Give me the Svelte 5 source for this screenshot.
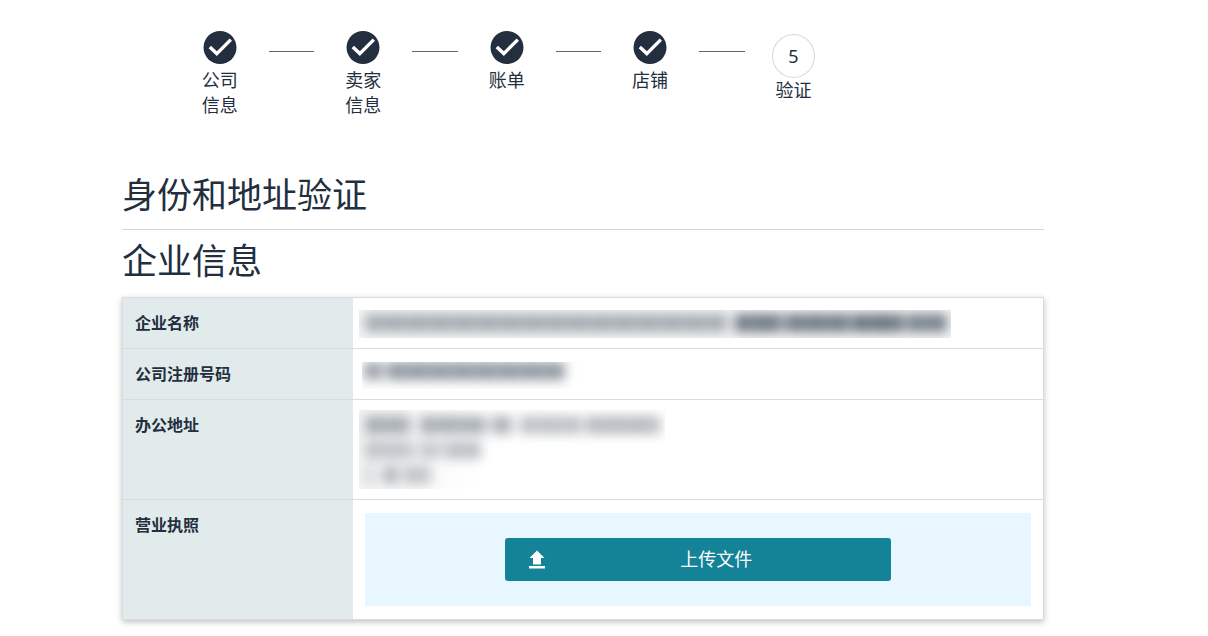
<script>
  const steps = [
    { label: "公司信息", done: true },
    { label: "卖家信息", done: true },
    { label: "账单", done: true },
    { label: "店铺", done: true },
    { label: "验证", done: false },
  ];

  // masked values are drawn as soft bars: [width, opacity, gap after]
  const rows = [
    {
      label: "企业名称",
      mask: "mask-name",
      lines: [
        [
          [362, 0.5, 8],
          [48, 0.85, 3],
          [64, 0.85, 2],
          [52, 0.9, 3],
          [40, 0.8, 0],
        ],
      ],
    },
    {
      label: "公司注册号码",
      mask: "mask-code",
      lines: [
        [
          [19, 0.6, 4],
          [178, 0.66, 0],
        ],
      ],
    },
    {
      label: "办公地址",
      mask: "mask-address",
      lines: [
        [
          [46, 0.5, 9],
          [67, 0.5, 5],
          [20, 0.5, 8],
          [62, 0.4, 4],
          [74, 0.44, 0],
        ],
        [
          [49, 0.34, 5],
          [24, 0.32, 3],
          [35, 0.4, 0],
        ],
        [
          [10, 0.22, 8],
          [16, 0.42, 5],
          [27, 0.36, 0],
        ],
      ],
    },
  ];
</script>

<svelte:head>
  <title>身份和地址验证</title>
</svelte:head>

<main>
  <ol class="steps">
    {#each steps as step, i}
      {#if i > 0}
        <li class="connector" aria-hidden="true"></li>
      {/if}
      <li class="step">
        {#if step.done}
          <svg class="check" viewBox="0 0 34 34" aria-hidden="true">
            <circle cx="17" cy="17.5" r="16.5" />
            <path d="M6.8 17 L13.8 23.6 L27.8 9.6" />
          </svg>
        {:else}
          <span class="number">{i + 1}</span>
        {/if}
        <span class="step-label">{step.label}</span>
      </li>
    {/each}
  </ol>

  <h1>身份和地址验证</h1>
  <h2>企业信息</h2>

  <table>
    <tbody>
      {#each rows as row}
        <tr>
          <th scope="row">{row.label}</th>
          <td class="masked-cell">
            <div class="mask {row.mask}">
              {#each row.lines as line}
                <div class="line">
                  {#each line as [width, opacity, gap]}
                    <span
                      style="width: {width}px; opacity: {opacity}; margin-right: {gap}px"
                    ></span>
                  {/each}
                </div>
              {/each}
            </div>
          </td>
        </tr>
      {/each}
      <tr>
        <th scope="row">营业执照</th>
        <td>
          <div class="upload">
            <button type="button">
              <svg viewBox="0 0 18 20" aria-hidden="true">
                <path d="M9 0.5 L16.5 8 H13 V14.5 H5 V8 H1.5 Z" />
                <rect x="1" y="16" width="16" height="2.5" />
              </svg>
              <span>上传文件</span>
            </button>
          </div>
        </td>
      </tr>
    </tbody>
  </table>
</main>

<style>
  :global(body) {
    margin: 0;
    background-color: #fff;
  }

  main {
    margin: 0 164px 0 122px;
    padding: 30px 0 15px;
    font-family: "Noto Sans", "Noto Sans CJK SC", sans-serif;
    font-size: 18px;
    line-height: 25px;
    color: #232f3e;
  }

  .steps {
    display: flex;
    width: 70%;
    min-height: 88px;
    margin: 0 0 0 62px;
    padding: 0;
    list-style: none;
  }

  .step {
    flex: 1 1 26px;
    display: flex;
    flex-direction: column;
    align-items: center;
  }

  .connector {
    flex: 1 1 0;
    height: 21px;
    margin: 0 13px;
    border-bottom: 1px solid #5a6878;
  }

  .check {
    width: 34px;
    height: 34px;
    margin-bottom: 4px;
  }

  .check circle {
    fill: #232f3e;
  }

  .check path {
    fill: none;
    stroke: #fff;
    stroke-width: 3.4;
  }

  .number {
    box-sizing: border-box;
    width: 43px;
    height: 44px;
    margin-top: 4px;
    border: 1px solid #d5d9d9;
    border-radius: 50%;
    line-height: 43px;
    text-align: center;
  }

  .step-label {
    width: 36px;
  }

  h1,
  h2 {
    margin: 0;
    font-size: 35px;
    font-weight: 400;
    line-height: 50px;
  }

  h1 {
    margin-top: 52px;
    padding-bottom: 9px;
    border-bottom: 1px solid #d1d5d9;
  }

  h2 {
    margin: 6px 0 11px;
  }

  table {
    width: 100%;
    border: 1px solid #dadddd;
    border-collapse: collapse;
    box-shadow: 0 2px 6px rgba(0, 0, 0, 0.25);
  }

  tr {
    border-bottom: 1px solid #dadddd;
  }

  th {
    width: 25%;
    box-sizing: border-box;
    padding: 13px 12px;
    background-color: #e2ebec;
    font-size: 16px;
    font-weight: 700;
    line-height: 24px;
    text-align: left;
    vertical-align: top;
  }

  td {
    padding: 13px 12px;
    vertical-align: top;
  }

  .masked-cell {
    padding: 10px 6px;
  }

  .mask {
    box-sizing: border-box;
    max-width: 100%;
    overflow: hidden;
    padding-left: 6px;
  }

  .mask-name {
    width: 592px;
    margin-top: 2px;
    padding-bottom: 3px;
    background-color: #f4f5f5;
  }

  .mask-code {
    width: 220px;
    margin: 3px 0 0 3px;
    padding: 0 0 2px 2px;
  }

  .mask-code .line {
    align-items: flex-start;
  }

  .mask-address {
    width: 306px;
    padding: 2px 0 2px 6px;
    background: linear-gradient(to right, #f4f5f5, #fff 40%);
  }

  .line {
    display: flex;
    align-items: center;
    height: 25px;
    filter: blur(6px);
  }

  .line span {
    flex: none;
    height: 18px;
    background-image: repeating-linear-gradient(
      to right,
      #57626f 0 14px,
      #65707c 14px 23px
    );
  }

  .upload {
    display: flex;
    justify-content: center;
    padding: 25px 0;
    background-color: #e8f6ff;
  }

  button {
    display: flex;
    align-items: center;
    width: 58%;
    height: 43px;
    padding: 0 4px 0 23px;
    border: 0;
    border-radius: 3px;
    background-color: #148297;
    color: #fff;
    font: inherit;
    cursor: pointer;
  }

  button svg {
    width: 18px;
    height: 20px;
    fill: #fff;
  }

  button span {
    flex: 1;
    text-align: center;
  }
</style>
